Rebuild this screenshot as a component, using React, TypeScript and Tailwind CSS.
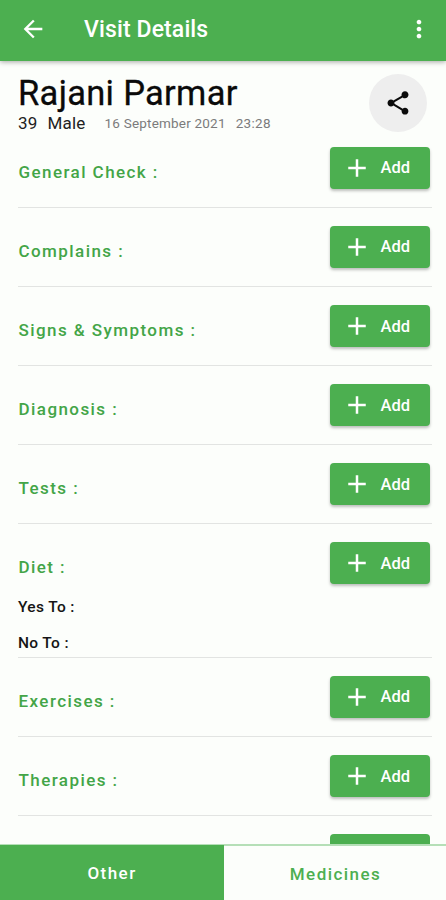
import React from "react";
import { MdAdd, MdArrowBack, MdMoreVert, MdShare } from "react-icons/md";

interface Section {
  id: string;
  title?: string;
  notes?: string[];
}

const sections: Section[] = [
  { id: "general", title: "General Check :" },
  { id: "complains", title: "Complains :" },
  { id: "signs", title: "Signs & Symptoms :" },
  { id: "diagnosis", title: "Diagnosis :" },
  { id: "tests", title: "Tests :" },
  { id: "diet", title: "Diet :", notes: ["Yes To :", "No To :"] },
  { id: "exercises", title: "Exercises :" },
  { id: "therapies", title: "Therapies :" },
];

const AddButton: React.FC = () => (
  <button className="flex h-[42px] w-[100px] shrink-0 items-center rounded-[4px] bg-[#4caf50] pl-[12.5px] text-white shadow-[0_2px_3px_rgba(0,0,0,0.25)]">
    <MdAdd className="size-[30px]" />
    <span className="mt-[2px] ml-[8.5px] text-[16.5px] leading-none font-medium">Add</span>
  </button>
);

const SectionRow: React.FC<{ section: Section }> = ({ section }) => (
  <div className="mr-[14px] ml-[18px] shrink-0 border-b border-[#e2e4e2]">
    <div className="flex h-[78.1px] items-start justify-between pt-[17.6px] pr-[2.5px]">
      <h2 className="mt-[15px] ml-[0.5px] text-[17px] leading-[20px] font-medium tracking-[1.43px] text-[#43a547]">
        {section.title}
      </h2>
      <AddButton />
    </div>
    {section.notes && (
      <div className="-mt-[5.5px] flex flex-col gap-[16px] pb-[4px]">
        {section.notes.map((note) => (
          <p key={note} className="text-[15.5px] leading-[20px] font-medium tracking-[0.35px] text-[#151515]">
            {note}
          </p>
        ))}
      </div>
    )}
  </div>
);

const App: React.FC = () => {
  return (
    <div className="flex h-[900px] w-[446px] flex-col overflow-hidden bg-[#fcfefb] font-[Roboto,sans-serif]">
      <header className="z-10 flex h-[61px] shrink-0 items-center bg-[#4caf50] pb-[4px] text-white shadow-[0_1px_5px_rgba(0,0,0,0.35)]">
        <MdArrowBack className="ml-[19px] size-[28px]" />
        <h1 className="mt-[2px] ml-[37px] text-[23px] leading-none font-medium tracking-[0.12px]">Visit Details</h1>
        <MdMoreVert className="mr-[13px] ml-auto size-[28px]" />
      </header>

      <main className="flex min-h-0 flex-1 flex-col overflow-hidden">
        <div className="flex h-[68px] shrink-0 justify-between pr-[19px] pl-[18px]">
          <div>
            <div className="mt-[12px] text-[34.5px] leading-[40px] tracking-[0.3px] text-[#0a0a0a] [-webkit-text-stroke:0.3px_#0a0a0a]">
              Rajani Parmar
            </div>
            <div className="flex items-center leading-[20px]">
              <span className="text-[17px] tracking-[0.2px] text-[#222]">39</span>
              <span className="ml-[10px] text-[17px] tracking-[0.2px] text-[#222]">Male</span>
              <span className="ml-[19px] text-[13.5px] tracking-[0.2px] text-[#7b7b7b]">16 September 2021</span>
              <span className="ml-[10px] text-[13.5px] tracking-[0.3px] text-[#7b7b7b]">23:28</span>
            </div>
          </div>
          <button className="mt-[13px] flex size-[58px] items-center justify-center rounded-full bg-[#eeeeee]">
            <MdShare className="size-[28px] text-[#0a0a0a]" />
          </button>
        </div>
        {sections.map((section) => (
          <SectionRow key={section.id} section={section} />
        ))}
        {/* top edge of the next section's button, showing above the tabs */}
        <div className="mt-[18px] mr-[16.5px] h-[42px] w-[100px] shrink-0 self-end rounded-[4px] bg-[#4caf50]" />
      </main>

      <nav className="flex h-[56px] shrink-0 border-t-2 border-[#b5dfb7] text-[17px] font-medium tracking-[1.45px]">
        <button className="-mt-px w-[224px] bg-[#4caf50] pt-[3px] text-white">Other</button>
        <button className="flex-1 pt-[3px] pl-px text-[#4caf50]">Medicines</button>
      </nav>
    </div>
  );
};

export default App;
